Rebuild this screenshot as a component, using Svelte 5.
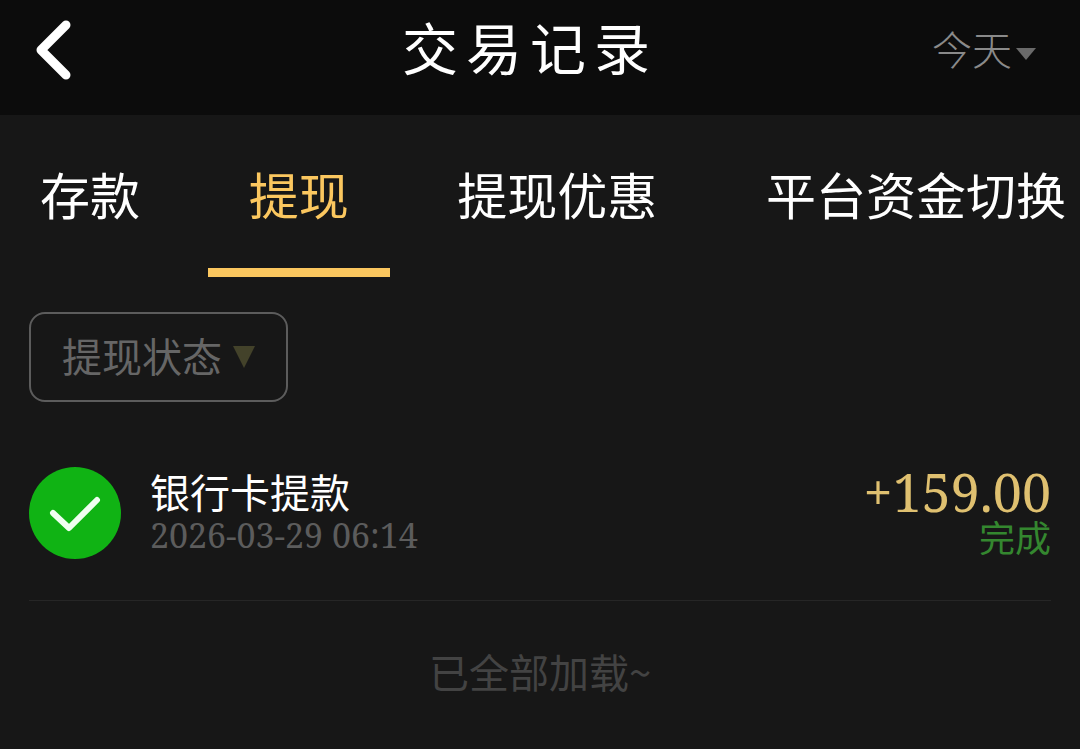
<script lang="ts">
  const tabs = ['存款', '提现', '提现优惠', '平台资金切换'];
  let activeTab = $state('提现');

  const records = [
    { title: '银行卡提款', time: '2026-03-29 06:14', amount: '+159.00', status: '完成' }
  ];
</script>

<div class="page">
  <header class="header">
    <button class="back" aria-label="返回">
      <svg width="40" height="64" viewBox="0 0 40 64">
        <path d="M34 7 L9 32 L34 57" fill="none" stroke="#fff" stroke-width="9" stroke-linecap="round" stroke-linejoin="round" />
      </svg>
    </button>
    <h1>交易记录</h1>
    <button class="date">
      <span>今天</span>
      <svg width="20" height="14" viewBox="0 0 20 14"><path d="M0 1 H20 L10 13 Z" fill="#6a6a6a" /></svg>
    </button>
  </header>

  <nav class="tabs">
    {#each tabs as tab}
      <button class="tab" class:active={tab === activeTab} onclick={() => (activeTab = tab)}>{tab}</button>
    {/each}
  </nav>

  <main>
    <button class="filter">
      <span>提现状态</span>
      <svg width="22" height="22" viewBox="0 0 22 22"><path d="M0 0 H22 L11 22 Z" fill="#43422a" /></svg>
    </button>

    <ul class="records">
      {#each records as record}
        <li>
          <svg class="check" width="92" height="92" viewBox="0 0 92 92">
            <circle cx="46" cy="46" r="46" fill="#10b314" />
            <path d="M24 46 L40 61 L68 33" fill="none" stroke="#effff0" stroke-width="6" stroke-linecap="round" stroke-linejoin="round" />
          </svg>
          <div class="info">
            <span class="title">{record.title}</span>
            <span class="time">{record.time}</span>
          </div>
          <div class="result">
            <span class="amount">{record.amount}</span>
            <span class="status">{record.status}</span>
          </div>
        </li>
      {/each}
    </ul>
    <p class="end">已全部加载~</p>
  </main>
</div>

<style>
  :global(body) {
    margin: 0;
    background: #171717;
  }

  .page {
    color: #fff;
    font-family: "Noto Sans CJK SC", sans-serif;
    overflow: hidden;
  }

  button {
    padding: 0;
    border: 0;
    background: none;
    color: inherit;
    font-family: inherit;
    cursor: pointer;
  }

  .header {
    display: grid;
    grid-template-columns: 1fr auto 1fr;
    align-items: center;
    height: 100px;
    padding: 0 44px 15px 24px;
    background: #0c0c0c;
  }

  .back {
    justify-self: start;
    display: flex;
    padding: 0 8px;
  }

  h1 {
    margin: 0;
    padding-bottom: 8px;
    font-size: 56px;
    font-weight: 400;
    line-height: 80px;
    letter-spacing: 8px;
  }

  .date {
    justify-self: end;
    display: flex;
    align-items: center;
    gap: 4px;
    color: #8a8a8a;
    font-size: 40px;
    font-weight: 300;
    line-height: 60px;
  }

  .date span {
    padding-bottom: 4px;
  }

  .date svg {
    margin-top: 8px;
  }

  .tabs {
    display: flex;
    justify-content: space-between;
    padding: 40px 14px 0 0;
  }

  .tab {
    padding: 0 41px 37px;
    border-bottom: 9px solid transparent;
    font-size: 50px;
    line-height: 76px;
    white-space: nowrap;
  }

  .tab:first-child {
    padding-left: 40px;
  }

  .tab:last-child {
    padding-right: 0;
  }

  .tab.active {
    border-color: #fbc75f;
    color: #fbc75f;
  }

  main {
    padding: 35px 29px 0;
  }

  .filter {
    display: flex;
    align-items: center;
    gap: 11px;
    height: 90px;
    padding: 0 31px;
    border: 2px solid #5c5c5c;
    border-radius: 16px;
    color: #666;
    font-size: 40px;
  }

  .filter span {
    padding-bottom: 4px;
  }

  .records {
    margin: 0;
    padding: 0;
    list-style: none;
  }

  li {
    display: flex;
    align-items: center;
    padding: 65px 0 41px;
    border-bottom: 1px solid #262626;
  }

  .info {
    display: flex;
    flex-direction: column;
    flex: 1;
    margin-left: 29px;
    padding-bottom: 4px;
  }

  .result {
    display: flex;
    flex-direction: column;
    align-items: flex-end;
    padding-bottom: 4px;
  }

  .title {
    font-size: 40px;
    line-height: 48px;
  }

  .time {
    color: #5c5c5c;
    font-family: "Noto Serif", "DejaVu Serif", serif;
    font-size: 34px;
    line-height: 40px;
  }

  .amount {
    color: #dfc070;
    font-family: "Noto Serif", "DejaVu Serif", serif;
    font-size: 52px;
    line-height: 50px;
  }

  .status {
    color: #34872f;
    font-size: 36px;
    line-height: 38px;
  }

  .end {
    margin: 40px 0 0;
    color: #434343;
    font-size: 40px;
    line-height: 60px;
    text-align: center;
  }
</style>
